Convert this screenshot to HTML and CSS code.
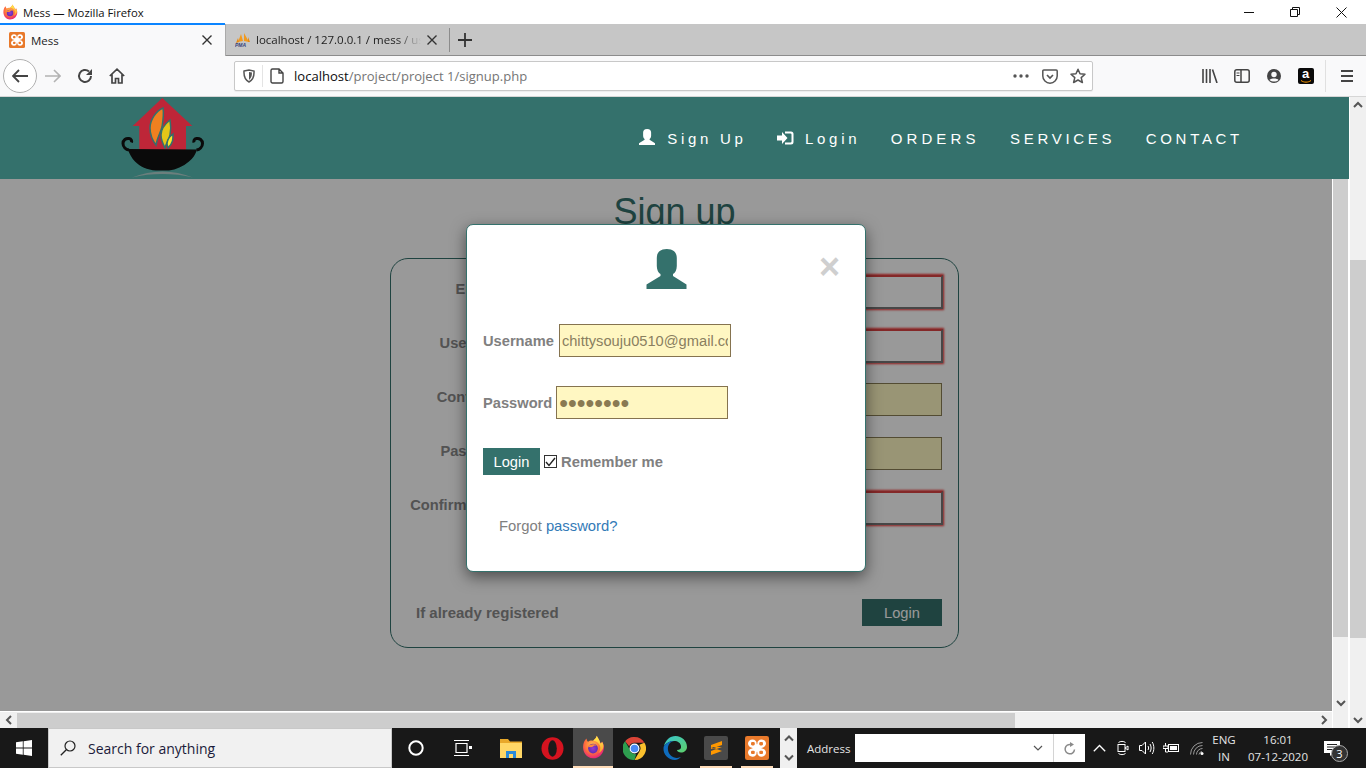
FILE: index.html
```html
<!DOCTYPE html>
<html lang="en">
<head>
<meta charset="utf-8">
<title>Mess</title>
<link rel="stylesheet" href="styles.css">
</head>
<body>
<svg class="defs" width="0" height="0" aria-hidden="true">
  <defs>
    <radialGradient id="foxBody" cx="45%" cy="40%" r="65%">
      <stop offset="0" stop-color="#ffbd4f"/><stop offset=".55" stop-color="#ff7139"/><stop offset="1" stop-color="#e31587"/>
    </radialGradient>
    <linearGradient id="foxTop" x1="0" y1="0" x2="0" y2="1">
      <stop offset="0" stop-color="#fff44f"/><stop offset="1" stop-color="#ff9a2e"/>
    </linearGradient>
    <radialGradient id="foxCore" cx="50%" cy="50%" r="55%">
      <stop offset="0" stop-color="#9a3ad0"/><stop offset="1" stop-color="#5a2bb0"/>
    </radialGradient>
    <linearGradient id="edgeA" x1="0" y1="0" x2="1" y2="1">
      <stop offset="0" stop-color="#37c6d0"/><stop offset="1" stop-color="#5fd068"/>
    </linearGradient>
    <symbol id="firefox" viewBox="0 0 32 32">
      <path fill="url(#foxBody)" d="M3 13C1.500 22 7 31 16 31c8.500 0 14.500-6.500 14.500-14.500 0-3-1-6-2.500-8-.5 1.500-1 2-2 2.500C25 7 22.500 4 21 1c-.5 3-3 4.500-5 6.500-2.500-.5-5 0-6.500 1.500C8 8 7.500 6 7.500 4.500 5 6 3.500 10 3 13z"/>
      <path fill="url(#foxTop)" d="M21 1c-.5 3-2.500 4.500-4.500 6.500 4 .5 7 3 8.500 6 1.500 3.500.5 8-2 10.500 4-1.500 7-5 7-9 0-2-.6-4-2-6-.5 1.500-1 2-2 2.500C25 7 22.500 4 21 1z"/>
      <circle cx="16" cy="18" r="6.500" fill="url(#foxCore)"/>
      <path fill="#ff8a3a" d="M9 15c3-3 9-4 12-1-3-.5-5 .5-6 2-2 .5-4 0-6-1z"/>
    </symbol>
    <symbol id="xampp" viewBox="0 0 32 32">
      <rect width="32" height="32" rx="3" fill="#e8792b"/>
      <path fill="#fff" d="M10 4.500c3.500 0 5.500 2.500 5.500 5 0 .8.1 1.500.5 1.500s.5-.7.5-1.500c0-2.500 2-5 5.500-5s6 2.500 6 5.500-2.500 5-5 5.500c-.8.100-1.500.2-1.500.5s.7.400 1.500.5c2.500.5 5 2.500 5 5.500s-2.500 5.500-6 5.500-5.500-2.500-5.500-5c0-.8-.1-1.500-.5-1.500s-.5.7-.5 1.500c0 2.500-2 5-5.500 5s-6-2.500-6-5.500 2.500-5 5-5.500c.8-.1 1.500-.2 1.500-.5s-.7-.4-1.500-.5c-2.500-.5-5-2.500-5-5.500s2.500-5.500 6-5.500z"/>
      <rect x="8" y="8" width="5" height="4.500" rx="1.500" fill="#e8792b"/>
      <rect x="19" y="8" width="5" height="4.500" rx="1.500" fill="#e8792b"/>
      <rect x="8" y="19.500" width="5" height="4.500" rx="1.500" fill="#e8792b"/>
      <rect x="19" y="19.500" width="5" height="4.500" rx="1.500" fill="#e8792b"/>
    </symbol>
    <symbol id="person" viewBox="0 0 40 40">
      <path d="M20.300 0C13 0 10.300 4 10.300 9v8c0 4 1.700 7 3.700 8v2L0 35.500V40h40v-4.500L26.500 27v-2c2-1 3.800-4 3.800-8V9c0-5-2.800-9-10-9z"/>
    </symbol>
  </defs>
</svg>

<div class="window">
  <div class="titlebar">
    <svg class="title-icon" width="16" height="16"><use href="#firefox"/></svg>
    <span class="title-text">Mess — Mozilla Firefox</span>
    <div class="win-controls">
      <span class="win-btn"><svg width="10" height="10" viewBox="0 0 10 10"><path d="M0 5.500h10" stroke="#111" fill="none"/></svg></span>
      <span class="win-btn"><svg width="10" height="10" viewBox="0 0 10 10"><path d="M.5 2.500h7v7h-7zM2.500 2.500v-2h7v7h-2" stroke="#111" fill="none"/></svg></span>
      <span class="win-btn"><svg width="11" height="11" viewBox="0 0 11 11"><path d="M.5.500l10 10M10.500.500l-10 10" stroke="#111" fill="none"/></svg></span>
    </div>
  </div>

  <div class="tabbar">
    <div class="tab tab-active">
      <svg class="tab-icon" width="16" height="16"><use href="#xampp"/></svg>
      <span class="tab-label">Mess</span>
      <svg class="tab-close" width="10" height="10" viewBox="0 0 10 10"><path d="M.5.500l9 9M9.500.500l-9 9" stroke="#333" stroke-width="1.400" fill="none"/></svg>
    </div>
    <div class="tab tab-idle">
      <svg class="tab-icon" width="16" height="16" viewBox="0 0 16 16"><path fill="#f29a1e" d="M6 2l2 7-5 1zM9 1l5 9-5-1z"/><path fill="#e58a14" d="M1 11l2-5 1 4zM13 5l2 5h-2z"/><text x="0" y="15" class="pma-text">PMA</text></svg>
      <span class="tab-label tab-fade">localhost / 127.0.0.1 / mess / users</span>
      <svg class="tab-close" width="10" height="10" viewBox="0 0 10 10"><path d="M.5.500l9 9M9.500.500l-9 9" stroke="#333" stroke-width="1.400" fill="none"/></svg>
    </div>
    <span class="tab-sep"></span>
    <svg class="new-tab" width="14" height="14" viewBox="0 0 14 14"><path d="M7 0v14M0 7h14" stroke="#333" stroke-width="1.800" fill="none"/></svg>
  </div>

  <div class="toolbar">
    <span class="back-btn"><svg width="16" height="14" viewBox="0 0 16 14"><path d="M7 1L1 7l6 6M1 7h15" stroke="#444" stroke-width="1.800" fill="none"/></svg></span>
    <span class="tb-btn"><svg width="16" height="14" viewBox="0 0 16 14"><path d="M9 1l6 6-6 6M15 7H0" stroke="#b3b3b3" stroke-width="1.600" fill="none"/></svg></span>
    <span class="tb-btn"><svg width="16" height="16" viewBox="0 0 16 16"><path d="M14 8a6 6 0 1 1-2-4.500" stroke="#444" stroke-width="2" fill="none"/><path d="M15 1v6H9z" fill="#444"/></svg></span>
    <span class="tb-btn"><svg width="16" height="16" viewBox="0 0 16 16"><path d="M.8 8L8 1.200 15.200 8M3 6.500V15h3.500v-4.500h3V15H13V6.500" stroke="#444" stroke-width="1.700" fill="none"/></svg></span>
    <div class="urlbar">
      <svg class="url-shield" width="12" height="14" viewBox="0 0 12 14"><path d="M1 2l5-1 5 1c.3 5-1 9-5 11C2 11 .7 7 1 2z" stroke="#555" stroke-width="1.500" fill="none"/><path d="M6 3l3 .6C9 7 8 9.500 6 11z" fill="#555"/></svg>
      <span class="url-sep"></span>
      <svg class="url-page" width="14" height="16" viewBox="0 0 14 16"><path d="M2.500 1H9l4 4v8.500a1.500 1.500 0 0 1-1.500 1.500h-9A1.500 1.500 0 0 1 1 13.500v-11A1.500 1.500 0 0 1 2.500 1zM9 1v4h4" stroke="#444" stroke-width="1.400" fill="none"/></svg>
      <span class="url-text"><span class="url-host">localhost</span>/project/project 1/signup.php</span>
      <svg class="url-dots" width="16" height="4" viewBox="0 0 16 4"><circle cx="2" cy="2" r="1.700"/><circle cx="8" cy="2" r="1.700"/><circle cx="14" cy="2" r="1.700"/></svg>
      <svg class="url-pocket" width="16" height="15" viewBox="0 0 16 15"><path d="M1.800 1h12.400a1 1 0 0 1 1 1v5a7 7 0 0 1-14.400 0V2a1 1 0 0 1 1-1z" stroke="#555" stroke-width="1.500" fill="none"/><path d="M5 6l3 3 3-3" stroke="#555" stroke-width="1.700" fill="none"/></svg>
      <svg class="url-star" width="16" height="16" viewBox="0 0 16 16"><path d="M8 1.200l2 4.600 5 .5-3.800 3.300 1.200 4.900L8 12l-4.400 2.500 1.200-4.900L1 6.300l5-.5z" stroke="#555" stroke-width="1.500" fill="none" stroke-linejoin="round"/></svg>
    </div>
    <span class="tb-btn tb-first-right"><svg width="16" height="14" viewBox="0 0 16 14"><path d="M1 0v14M4.500 0v14M8 0v14M10.500.500l4.500 13.500" stroke="#444" stroke-width="1.600" fill="none"/></svg></span>
    <span class="tb-btn"><svg width="16" height="14" viewBox="0 0 16 14"><rect x=".8" y=".8" width="14.400" height="12.400" rx="2" stroke="#444" stroke-width="1.500" fill="none"/><path d="M7 1v12" stroke="#444" stroke-width="1.500"/><path d="M2.500 4h3M2.500 6.500h3" stroke="#444"/></svg></span>
    <span class="tb-btn"><svg width="14" height="14" viewBox="0 0 14 14"><circle cx="7" cy="7" r="7" fill="#444"/><circle cx="7" cy="5.500" r="2.700" fill="#f9f9fa"/><path d="M2.500 11c1-2 8-2 9 0-2 2-7 2-9 0z" fill="#f9f9fa"/></svg></span>
    <span class="tb-btn"><span class="amazon"><span class="amazon-a">a</span><svg class="amazon-smile" width="12" height="3" viewBox="0 0 12 3"><path d="M1 .5c3 2.200 7 2.200 10 0" stroke="#f90" fill="none"/></svg></span></span>
    <span class="tb-sep"></span>
    <span class="tb-btn tb-menu"><svg width="14" height="12" viewBox="0 0 14 12"><path d="M1 1h12M1 6h12M1 11h12" stroke="#444" stroke-width="1.800" fill="none"/></svg></span>
  </div>

  <div class="viewport">
    <div class="doc">
      <header class="site-header">
        <svg class="logo" width="88" height="84" viewBox="0 0 88 84">
          <path fill="#be2638" d="M42.300 0L12.700 28h6.600v24h46.700V28h6.300z"/>
          <g stroke="#34716c" stroke-width="1.500">
            <path fill="#f08020" d="M43 10C36 13 30 22 30 30c0 7 3 13 6 17 1-7 4-11 6-18 1-6 2-13 1-19z"/>
            <path fill="#e4c618" d="M50 22c-5 4-9 9-9 15 0 5 2 9 4 13 1-5 4-8 5-13 1-5 1-10 0-15z"/>
            <path fill="#fbe92a" d="M53 36c-4 3-6 7-6 10l1 4c2-2 4-5 4.500-7 .5-2 .5-5 .5-7z"/>
          </g>
          <path fill="none" stroke="#0a0a0a" stroke-width="3" d="M9 52c-3-.5-6-3-6-6.500S6 40 9 40.500c2.500.5 3 2.500 2.500 4M76.500 52c3-.5 6-3 6-6.500s-3-5.500-6-5c-2.500.5-3 2.500-2.500 4"/>
          <path fill="#0a0a0a" d="M8 51l69 .5c-1.500 5-4 9-8 12-6 5-13 8-20 9H36c-9-.5-16-4-21-9-3-3-6-8-7-12.500z"/>
          <path fill="#6b7f7d" d="M12 79.500c10-4 20-6 30.500-6S63 75.500 73 79.500c-10-2.500-20-3.500-30.500-3.500S22 77 12 79.500z"/>
        </svg>
        <nav class="site-nav">
          <a class="nav-item"><svg class="nav-icon nav-icon-user" width="16" height="16"><use href="#person"/></svg>Sign Up</a>
          <a class="nav-item"><svg class="nav-icon nav-icon-login" width="17" height="14" viewBox="0 0 17 14"><path d="M0 4.500h5V1l5.500 6L5 13V9.500H0z"/><path d="M8 .5h6a2.500 2.500 0 0 1 2.500 2.500v8a2.500 2.500 0 0 1-2.500 2.500H8v-2h5.500a1 1 0 0 0 1-1V3.500a1 1 0 0 0-1-1H8z"/></svg>Login</a>
          <a class="nav-item nav-orders">ORDERS</a>
          <a class="nav-item">SERVICES</a>
          <a class="nav-item">CONTACT</a>
        </nav>
      </header>

      <div class="doc-lower">
        <div class="doc-left">
          <main class="stage">
            <div class="signup">
              <h1 class="signup-title">Sign up</h1>
              <form class="card">
                <div class="form-row"><label class="form-label">Email</label><input class="field field-invalid" type="text"></div>
                <div class="form-row"><label class="form-label">Username</label><input class="field field-invalid" type="text"></div>
                <div class="form-row"><label class="form-label">Contact no</label><input class="field field-filled" type="text"></div>
                <div class="form-row"><label class="form-label">Password</label><input class="field field-filled" type="text"></div>
                <div class="form-row"><label class="form-label">Confirm Password</label><input class="field field-invalid" type="text"></div>
                <div class="card-foot"><span class="form-label-plain">If already registered</span><button class="card-login" type="button">Login</button></div>
              </form>
            </div>
            <div class="overlay">
              <div class="modal">
                <span class="modal-close">×</span>
                <svg class="modal-avatar" width="41" height="40"><use href="#person"/></svg>
                <div class="modal-row modal-row-first"><label class="modal-label">Username</label><input class="modal-input" type="text" value="chittysouju0510@gmail.com"></div>
                <div class="modal-row"><label class="modal-label">Password</label><input class="modal-input modal-pass" type="password" value="password"></div>
                <div class="modal-row">
                  <button class="modal-login" type="button">Login</button>
                  <span class="check"><svg width="11" height="10" viewBox="0 0 11 10"><path d="M1 5l3 3.500L10 1" stroke="#222" stroke-width="1.400" fill="none"/></svg></span>
                  <span class="modal-label modal-label-wide">Remember me</span>
                </div>
                <p class="forgot">Forgot <a class="forgot-link">password?</a></p>
              </div>
            </div>
          </main>
          <div class="hscroll">
            <span class="hs-arrow"><svg width="8" height="10" viewBox="0 0 8 10"><path d="M6 1L2 5l4 4" stroke="#555" stroke-width="2" fill="none"/></svg></span>
            <span class="hs-thumb"></span>
            <span class="hs-arrow hs-arrow-end"><svg width="8" height="10" viewBox="0 0 8 10"><path d="M2 1l4 4-4 4" stroke="#555" stroke-width="2" fill="none"/></svg></span>
          </div>
        </div>
        <div class="vscroll-inner">
          <span class="vi-thumb"></span>
          <span class="vi-arrow"><svg width="10" height="8" viewBox="0 0 10 8"><path d="M1 2l4 4 4-4" stroke="#555" stroke-width="2" fill="none"/></svg></span>
        </div>
      </div>
    </div>
    <div class="vscroll-outer">
      <span class="vo-arrow"><svg width="10" height="8" viewBox="0 0 10 8"><path d="M1 6l4-4 4 4" stroke="#555" stroke-width="2" fill="none"/></svg></span>
      <span class="vo-thumb"></span>
      <span class="vo-arrow vo-arrow-end"><svg width="10" height="8" viewBox="0 0 10 8"><path d="M1 2l4 4 4-4" stroke="#555" stroke-width="2" fill="none"/></svg></span>
    </div>
  </div>

  <footer class="taskbar">
    <span class="start"><svg width="16" height="16" viewBox="0 0 16 16"><path fill="#fff" d="M0 2.300l6.800-1v6.300H0zM7.600 1.200L16 0v7.600H7.600zM0 8.400h6.800v6.300l-6.800-1zM7.600 8.400H16V16l-8.400-1.200z"/></svg></span>
    <div class="search">
      <svg class="search-icon" width="16" height="16" viewBox="0 0 16 16"><circle cx="10" cy="6" r="5" stroke="#222" stroke-width="1.200" fill="none"/><path d="M6.300 9.700L.8 15.200" stroke="#222" stroke-width="1.300"/></svg>
      <span class="search-text">Search for anything</span>
    </div>
    <span class="tk-cortana"><svg width="16" height="16" viewBox="0 0 16 16"><circle cx="8" cy="8" r="6.700" stroke="#fff" stroke-width="2" fill="none"/></svg></span>
    <span class="tk-view"><svg width="18" height="16" viewBox="0 0 18 16"><path d="M2 3.500h11v9H2zM0 .5h15M0 15.500h15" stroke="#fff" stroke-width="1.200" fill="none"/><rect x="15" y="6" width="3" height="3" fill="#fff"/></svg></span>
    <div class="tk-apps">
      <span class="tk-app"><svg width="22" height="19" viewBox="0 0 22 19"><path fill="#e8a82a" d="M0 0h8l2 2.500h12V19H0z"/><path fill="#ffd766" d="M0 4h22v15H0z"/><path fill="#2a8ad8" d="M6 19v-7h10v7h-3v-4H9v4z"/></svg></span>
      <span class="tk-app"><svg width="23" height="23" viewBox="0 0 23 23"><ellipse cx="11.500" cy="11.500" rx="11" ry="11.200" fill="#d5131f"/><ellipse cx="11.500" cy="11.500" rx="4.300" ry="8.300" fill="#1a1a1a"/></svg></span>
      <span class="tk-app tk-app-on"><svg width="24" height="24"><use href="#firefox"/></svg></span>
      <span class="tk-app"><svg width="23" height="23" viewBox="0 0 24 24"><path fill="#db4437" d="M12 0a12 12 0 0 1 10.400 6H12a6 6 0 0 0-5.600 3.700L2.200 4.400A12 12 0 0 1 12 0z"/><path fill="#fbc02d" d="M22.400 6A12 12 0 0 1 12 24l5.200-9A6 6 0 0 0 17 8.100z"/><path fill="#2e9e4f" d="M2.200 4.400L7 13a6 6 0 0 0 6.800 4.800L12 24A12 12 0 0 1 2.200 4.400z"/><circle cx="12" cy="12" r="5.200" fill="#fff"/><circle cx="12" cy="12" r="4" fill="#4a8af4"/></svg></span>
      <span class="tk-app"><svg width="24" height="24" viewBox="0 0 24 24"><path fill="url(#edgeA)" d="M1 10C2.500 4 7 0 12.500 0 19 0 24 5 24 11c0 3.500-3 5.500-6 5.500-2 0-4-1-4-2.500 3 0 4.500-1.500 4-4C17.500 7 15 5 11 5c-4.500 0-8 2-10 5z"/><path fill="#0f6cbd" d="M1 10c2-3 5.500-5 10-5-5 1-6.500 5-6 9 .5 4 4 8 9 8 1.500 0 3-.5 4-.9C16 23 14 24 12 24 5 24 0 18 .5 12c0-.7.2-1.400.5-2z"/></svg></span>
      <span class="tk-app tk-app-mark"><span class="sublime"><svg width="13" height="18" viewBox="0 0 13 18"><path fill="#ff9800" d="M1 6l11-4v4L1 10zM1 8l11 4v-4zM1 12l11-4v4L1 16z"/></svg></span></span>
      <span class="tk-app tk-app-mark"><svg width="24" height="24"><use href="#xampp"/></svg></span>
    </div>
    <div class="tk-arrows">
      <svg width="10" height="7" viewBox="0 0 10 7"><path d="M1 5.500l4-4 4 4" stroke="#555" stroke-width="2" fill="none"/></svg>
      <svg width="10" height="7" viewBox="0 0 10 7"><path d="M1 1.500l4 4 4-4" stroke="#555" stroke-width="2" fill="none"/></svg>
    </div>
    <span class="addr-label">Address</span>
    <div class="addr-box">
      <svg class="addr-chev" width="10" height="6" viewBox="0 0 10 6"><path d="M1 1l4 4 4-4" stroke="#555" stroke-width="1.200" fill="none"/></svg>
      <span class="addr-sep"></span>
      <svg class="addr-go" width="12" height="13" viewBox="0 0 12 13"><path d="M10.500 7.500A4.700 4.700 0 1 1 7 2.600" stroke="#8a8a8a" stroke-width="1.500" fill="none"/><path d="M6 0l4 2.600L6 5z" fill="#8a8a8a"/></svg>
    </div>
    <span class="tray tray-24 tray-first"><svg width="13" height="8" viewBox="0 0 13 8"><path d="M.8 7.200L6.500 1.500l5.700 5.700" stroke="#fff" stroke-width="1.300" fill="none"/></svg></span>
    <span class="tray tray-24"><svg width="12" height="16" viewBox="0 0 12 16"><rect x="1" y="4.500" width="7" height="7" stroke="#fff" fill="none"/><path d="M8 8l3-2v4zM1.500 2.500c2-1.500 5-1.500 7 0M1.500 13.500c2 1.500 5 1.500 7 0" stroke="#fff" fill="none"/></svg></span>
    <span class="tray tray-23"><svg width="16" height="14" viewBox="0 0 16 14"><path d="M.5 4.500h2.500L6.500 1v12L3 9.500H.5zM9 5c.8 1.200.8 2.800 0 4M11 3c1.500 2.500 1.500 5.500 0 8M13.200 1c2.200 3.600 2.200 8.400 0 12" stroke="#fff" fill="none"/></svg></span>
    <span class="tray tray-26"><svg width="16" height="10" viewBox="0 0 16 10"><rect x="5.500" y="1.500" width="10" height="7" stroke="#fff" fill="none"/><rect x="7" y="3" width="7" height="4" fill="#fff"/><path d="M2.500 0v3M0 3h5v2.500H0zM2.500 5.500V9H5" stroke="#fff" fill="none"/></svg></span>
    <span class="tray tray-26"><svg width="14" height="13" viewBox="0 0 14 13"><path d="M.5 12.500A12 12 0 0 1 12.500.5M3.500 12.500a9 9 0 0 1 9-9M6.500 12.500a6 6 0 0 1 6-6M9 12.500a3.500 3.500 0 0 1 3-3" stroke="#9a9a9a" fill="none"/><circle cx="12" cy="11.500" r="1.500" fill="#fff"/></svg></span>
    <span class="tk-lang"><span>ENG</span><span>IN</span></span>
    <span class="tk-clock"><span>16:01</span><span>07-12-2020</span></span>
    <span class="tk-notify">
      <svg width="16" height="15" viewBox="0 0 16 15"><path fill="#fff" d="M0 0h16v12h-7l-3 3v-3H0z"/><path d="M3 3.500h10M3 6h10M3 8.500h7" stroke="#222"/></svg>
      <span class="notify-badge">3</span>
    </span>
  </footer>
</div>
</body>
</html>
```

FILE: styles.css
```css
* { box-sizing: border-box; }
html, body { margin: 0; padding: 0; height: 100%; overflow: hidden; }
body { font-family: "Liberation Sans", Arial, sans-serif; background: #fff; }
.defs { position: absolute; }
svg { display: block; flex: none; }

.window { display: flex; flex-direction: column; width: 1366px; height: 768px; }

/* title bar */
.titlebar { flex: none; height: 24px; display: flex; align-items: center; background: #fff; padding-left: 2px; font-family: "Open Sans", sans-serif; }
.title-text { margin-left: 5px; font-size: 11.300px; color: #111; }
.win-controls { margin-left: auto; display: flex; margin-right: 2px; }
.win-btn { width: 46px; height: 20px; display: flex; align-items: center; justify-content: center; }

/* tabs */
.tabbar { flex: none; height: 32px; display: flex; align-items: center; background: #c6c6c6; border-bottom: 1px solid #8c8c8c; font-family: "Open Sans", sans-serif; font-size: 11.500px; color: #1c1c1c; }
.tab { width: 224px; height: 32px; display: flex; align-items: center; }
.tab-active { width: 225px; background: #f9f9fa; border-top: 2px solid #0a84ff; padding: 0 13px 0 9px; margin-top: -1px; height: 33px; }
.tab-idle { padding: 0 12px 0 9px; border-left: 1px solid #aaa; }
.tab-icon { margin-right: 6px; }
.tab-idle .tab-icon { margin-right: 5px; margin-left: 0; }
.tab-label { flex: 1; white-space: nowrap; overflow: hidden; }
.tab-fade { -webkit-mask-image: linear-gradient(to right, #000 85%, transparent 100%); mask-image: linear-gradient(to right, #000 85%, transparent 100%); }
.tab-close { margin-left: 6px; }
.pma-text { font: italic bold 5px "Liberation Sans", sans-serif; fill: #35407a; }
.tab-sep { width: 1px; height: 24px; background: #8c8c8c; }
.new-tab { margin-left: 8px; }

/* toolbar */
.toolbar { flex: none; height: 41px; display: flex; align-items: center; background: #f9f9fa; border-bottom: 1px solid #d6d6d6; padding-left: 3px; }
.back-btn { width: 34px; height: 34px; border-radius: 50%; background: #fff; border: 1px solid #b0b0b0; display: flex; align-items: center; justify-content: center; }
.tb-btn { width: 32px; height: 32px; display: flex; align-items: center; justify-content: center; flex: none; }
.urlbar { width: 859px; height: 30px; margin-left: 101px; background: #fff; border: 1px solid #c8c8c8; border-radius: 2px; display: flex; align-items: center; padding-left: 8px; box-shadow: 0 1px 1px rgba(0,0,0,.06); }
.url-sep { width: 1px; height: 22px; background: #e4e4e4; margin-left: 7px; }
.url-page { margin-left: 7px; }
.url-text { margin-left: 10px; font-family: "Open Sans", sans-serif; font-size: 13.050px; color: #757575; white-space: nowrap; flex: 1; }
.url-host { color: #0c0c0d; }
.url-dots { fill: #555; margin-right: 13px; }
.url-pocket { margin-right: 12px; }
.url-star { margin-right: 6px; }
.tb-first-right { margin-left: 101px; }
.tb-sep { width: 1px; height: 32px; background: #e0e0e0; margin-left: 3px; }
.tb-menu { margin-left: 5px; }
.amazon { width: 16px; height: 16px; background: #0a0a0a; border-radius: 2px; position: relative; display: block; }
.amazon-a { position: absolute; left: 4px; top: -1px; color: #fff; font-size: 13px; font-weight: bold; line-height: 14px; }
.amazon-smile { position: absolute; left: 2px; top: 12px; }

/* viewport */
.viewport { flex: 1; min-height: 0; display: flex; background: #fff; }
.doc { width: 1349px; display: flex; flex-direction: column; }
.site-header { flex: none; height: 82px; background: #34716c; display: flex; align-items: flex-start; position: relative; padding-left: 120px; }
.logo { margin-top: 1px; }
.site-nav { margin-left: auto; display: flex; align-items: center; height: 82px; padding-right: 106px; color: #fff; font-size: 15px; letter-spacing: 3.700px; gap: 30.500px; }
.nav-item { display: flex; align-items: center; white-space: nowrap; }
.nav-orders { letter-spacing: 4.100px; }
.nav-icon { fill: #fff; }
.nav-icon-user { margin-right: 12px; margin-top: -3px; }
.nav-icon-login { margin-right: 11px; margin-top: -1px; }
.doc-lower { flex: 1; min-height: 0; display: flex; }
.doc-left { width: 1332px; display: flex; flex-direction: column; }
.stage { height: 532px; position: relative; overflow: hidden; background: #fff; }
.signup { width: 569px; margin-left: 390px; padding-top: 13px; }
.signup-title { margin: 0 0 26px; font-size: 36px; font-weight: normal; line-height: 40px; text-align: center; color: #34716c; }
.card { height: 390px; border: 1px solid #34716c; border-radius: 18px; padding: 16px 15px 0 14px; }
.form-row { display: flex; align-items: center; height: 34px; margin-bottom: 20px; }
.form-label { width: 140px; margin-right: 5px; padding-bottom: 6px; text-align: center; font-size: 14.670px; font-weight: bold; color: #8a8a8a; white-space: nowrap; }
.field { width: 393px; height: 34px; padding: 2px; font-size: 16px; }
.field-invalid { background: #fff; border: 2px solid; border-color: #d44 #777 #777 #d44; box-shadow: 0 0 2px 1px #ee3333; }
.field-filled { width: 392px; height: 33px; align-self: flex-start; background: #fff8c4; border: 1px solid #8a7f55; }
.card-foot { display: flex; align-items: center; justify-content: space-between; margin-top: 74px; padding: 0 1px 0 11px; }
.form-label-plain { font-size: 15px; font-weight: bold; color: #8a8a8a; }
.card-login { width: 80px; height: 27px; border: 0; background: #34716c; color: #fff; font: 14.670px "Liberation Sans", sans-serif; padding: 0; }

/* modal */
.overlay { position: absolute; inset: 0; background: rgba(0,0,0,.4); display: flex; justify-content: center; align-items: flex-start; padding-top: 45px; }
.modal { width: 400px; height: 348px; background: #fff; border: 1px solid #34716c; border-radius: 7px; box-shadow: 0 5px 15px rgba(0,0,0,.5); padding: 24px 16px 0; position: relative; }
.modal-close { position: absolute; right: 25px; top: 24px; font-size: 36px; line-height: 36px; font-weight: bold; color: #cfcfcf; }
.modal-avatar { fill: #34716c; margin: 0 auto; position: relative; left: 0; }
.modal-row { display: flex; align-items: center; margin-top: 29px; }
.modal-row-first { margin-top: 35px; }
.modal-label { font-size: 14.670px; font-weight: bold; color: #808080; white-space: nowrap; }
.modal-label-wide { font-size: 14.800px; }
.modal-input { width: 172px; height: 33px; margin-left: 4px; padding: 2px; font: 14.670px "Liberation Sans", sans-serif; color: #8a7f5f; background: #fff7c2; border: 1px solid #85734f; border-radius: 0; }
.modal-row-first .modal-input { margin-left: 5px; }
.modal-pass { font-size: 25px; color: #8a7a52; padding: 3px 2px 1px; }
.modal-login { width: 57px; height: 27px; padding: 0; border: 0; background: #34716c; color: #fff; font: 14.670px "Liberation Sans", sans-serif; }
.check { width: 13px; height: 13px; margin: 0 4px; border: 1px solid #333; background: #fff; display: flex; align-items: center; justify-content: center; }
.forgot { margin: 41px 0 0 16px; font-size: 14.800px; line-height: 20px; color: #808080; }
.forgot-link { color: #337ab7; }

/* scrollbars */
.hscroll { height: 17px; margin-top: 0; background: #f0f0f0; border-top: 1px solid #fff; display: flex; align-items: center; }
.hs-arrow { width: 17px; height: 15px; display: flex; align-items: center; justify-content: center; flex: none; }
.hs-thumb { width: 998px; height: 15px; background: #cdcdcd; }
.hs-arrow-end { margin-left: auto; }
.vscroll-inner { width: 17px; border-left: 1px solid #fff; border-right: 1px solid #fff; background: #f0f0f0; display: flex; flex-direction: column; align-items: center; }
.vi-thumb { width: 100%; height: 458px; background: #cdcdcd; }
.vi-arrow { margin-top: 62px; }
.vscroll-outer { width: 17px; border-left: 1px solid #fff; background: #f0f0f0; display: flex; flex-direction: column; align-items: center; padding-top: 4px; }
.vo-thumb { width: 100%; height: 378px; background: #cdcdcd; margin-top: 151px; }
.vo-arrow-end { margin-top: 78px; }

/* taskbar */
.taskbar { flex: none; height: 40px; background: #181818; display: flex; align-items: center; font-family: "Open Sans", sans-serif; color: #e4e4e4; }
.start { width: 48px; display: flex; justify-content: center; }
.search { width: 344px; height: 40px; background: #f1f1f1; border: 1px solid #c8c8c8; display: flex; align-items: center; padding-left: 11px; }
.search-text { margin-left: 12px; font-size: 14px; color: #1b1b3a; }
.tk-cortana { width: 48px; display: flex; justify-content: center; }
.tk-view { width: 46px; display: flex; justify-content: center; }
.tk-apps { display: flex; gap: 1px; margin-left: 5px; }
.tk-app { width: 40px; height: 40px; display: flex; align-items: center; justify-content: center; position: relative; }
.tk-app-on { background: #4a4a4a; border-bottom: 2px solid #ffdcb8; }
.tk-app-mark::after { content: ""; position: absolute; left: 4px; right: 4px; bottom: 0; height: 2px; background: #ffdcb8; }
.sublime { width: 24px; height: 24px; border-radius: 2px; background: #4a4a4a; display: flex; align-items: center; justify-content: center; }
.tk-arrows { width: 17px; height: 40px; margin-left: 3px; background: #f0f0f0; display: flex; flex-direction: column; align-items: center; justify-content: space-between; padding: 7px 0; }
.addr-label { margin-left: 10px; width: 48px; font-size: 11.500px; }
.addr-box { width: 230px; height: 28px; background: #fff; display: flex; align-items: center; justify-content: flex-end; padding-right: 9px; }
.addr-chev { margin-right: 10px; }
.addr-sep { width: 1px; height: 28px; background: #d4d4d4; margin-right: 10px; }
.tray { display: flex; justify-content: center; flex: none; }
.tray-first { margin-left: 2px; }
.tray-24 { width: 24px; }
.tray-23 { width: 23px; }
.tray-26 { width: 26px; }
.tk-lang { width: 28px; display: flex; flex-direction: column; align-items: center; font-size: 11.500px; line-height: 17px; }
.tk-clock { width: 80px; display: flex; flex-direction: column; align-items: center; font-size: 11.500px; line-height: 17px; }
.tk-notify { width: 28px; height: 40px; display: flex; align-items: center; justify-content: center; position: relative; }
.notify-badge { position: absolute; left: 13px; top: 17px; width: 17px; height: 17px; border-radius: 50%; background: #333; border: 1px solid #aaa; color: #fff; font-size: 11px; line-height: 15px; text-align: center; }
```
